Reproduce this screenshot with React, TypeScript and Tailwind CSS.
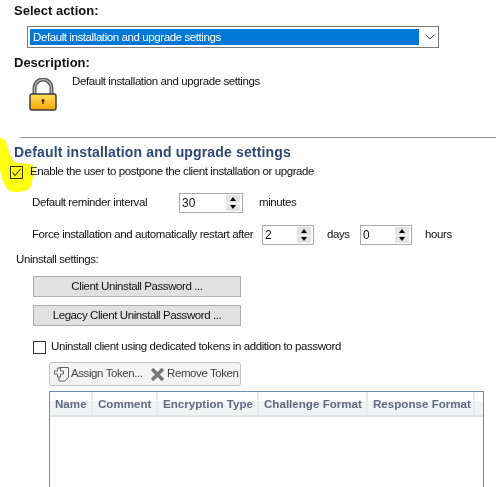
import { ChevronDown } from "lucide-react";

const uiFont = { fontFamily: '"Liberation Sans", Arial, sans-serif' };

function Spin({ value, className }: { value: string; className: string }) {
  return (
    <div className={`flex h-[20px] items-stretch border border-[#ababab] bg-white ${className}`}>
      <span className="flex-1 pl-[2px] text-[12px] leading-[18px] tracking-normal">{value}</span>
      <div className="my-px mr-[2px] flex w-[14px] flex-col gap-px">
        <div className="flex flex-1 items-center justify-center bg-[#e3e3e3]">
          <div className="h-0 w-0 border-x-[3.5px] border-b-[4px] border-x-transparent border-b-black" />
        </div>
        <div className="flex flex-1 items-center justify-center bg-[#e3e3e3]">
          <div className="h-0 w-0 border-x-[3.5px] border-t-[4px] border-x-transparent border-t-black" />
        </div>
      </div>
    </div>
  );
}

function CheckBox({ checked }: { checked?: boolean }) {
  return (
    <div className="flex h-[13px] w-[13px] shrink-0 items-center justify-center border border-[#333]">
      {checked && (
        <svg width="11" height="11" viewBox="0 0 11 11" fill="none">
          <path d="M1.5 5.5 L4 8.5 L9.5 2" stroke="#333" strokeWidth="1.1" />
        </svg>
      )}
    </div>
  );
}

function GrayButton({ label }: { label: string }) {
  return (
    <div className="flex h-[21px] w-[208px] items-center justify-center border border-[#adadad] bg-[#e1e1e1]">
      {label}
    </div>
  );
}

function LockIcon() {
  return (
    <svg width="30" height="33" viewBox="0 0 30 33">
      <defs>
        <linearGradient id="lockBody" x1="0" y1="0" x2="0" y2="1">
          <stop offset="0" stopColor="#ffe25a" />
          <stop offset="1" stopColor="#f7a400" />
        </linearGradient>
      </defs>
      <path d="M6.5 17 V10 a8.5 8.5 0 0 1 17 0 V17" fill="none" stroke="#555" strokeWidth="4" />
      <path d="M6.5 16 V10 a8.5 8.5 0 0 1 17 0 V16" fill="none" stroke="#b5b5b5" strokeWidth="1.5" />
      <rect x="2" y="16" width="26" height="16" rx="2" fill="url(#lockBody)" stroke="#3c3c3c" strokeWidth="1.5" />
      <circle cx="15" cy="22.5" r="1.5" fill="#3a2a00" />
      <rect x="14.3" y="22.5" width="1.4" height="3.5" fill="#3a2a00" />
    </svg>
  );
}

const columns = [
  { name: "Name", width: "w-[43px]" },
  { name: "Comment", width: "w-[65px]" },
  { name: "Encryption Type", width: "w-[101px]" },
  { name: "Challenge Format", width: "w-[109px]" },
  { name: "Response Format", width: "w-[107px]" },
];

export default function App() {
  return (
    <div
      className="relative h-[487px] w-[496px] overflow-hidden whitespace-nowrap bg-white text-[11.5px] tracking-[-0.41px] text-[#111]"
      style={uiFont}
    >
      <div className="flex flex-col">
        <div className="ml-[14px] mt-[3px] h-[16px] text-[13px] font-bold leading-[16px] tracking-normal">Select action:</div>

        <div className="ml-[27px] mt-[7px] flex h-[22px] w-[412px] items-center border border-[#7a7a7a] p-[2px]">
          <div className="h-[16px] w-[389px] shrink-0 bg-[#0078d7] pl-[3px] leading-[16px] text-white">
            Default installation and upgrade settings
          </div>
          <ChevronDown className="ml-[3px] h-[16px] w-[16px] shrink-0 text-[#555]" strokeWidth={1.5} />
        </div>

        <div className="ml-[14px] mt-[7px] h-[16px] text-[13px] font-bold leading-[16px] tracking-normal">Description:</div>

        <div className="ml-[28px] flex h-[66px] items-start">
          <div className="mt-[7px]">
            <LockIcon />
          </div>
          <span className="ml-[14px] mt-[3px] leading-[14px]">Default installation and upgrade settings</span>
        </div>

        <div className="ml-[20px] h-px bg-[#8c8c8c]" />

        <div className="ml-[14px] mt-[5px] h-[18px] text-[14px] font-bold leading-[18px] tracking-[0.15px] text-[#2c4a75]">
          Default installation and upgrade settings
        </div>

        <div className="ml-[10px] mt-[4px] flex h-[14px] items-center gap-[7px]">
          <CheckBox checked />
          <span>Enable the user to postpone the client installation or upgrade</span>
        </div>

        <div className="ml-[32px] mt-[14px] flex h-[20px] items-center">
          <span className="w-[147px]">Default reminder interval</span>
          <Spin value="30" className="w-[64px]" />
          <span className="ml-[16px]">minutes</span>
        </div>

        <div className="ml-[32px] mt-[12px] flex h-[20px] items-center">
          <span className="w-[230px]">Force installation and automatically restart after</span>
          <Spin value="2" className="w-[52px]" />
          <span className="ml-[13px] w-[33px]">days</span>
          <Spin value="0" className="w-[52px]" />
          <span className="ml-[13px]">hours</span>
        </div>

        <div className="ml-[16px] mt-[7px] h-[14px] leading-[14px]">Uninstall settings:</div>

        <div className="ml-[33px] mt-[10px] flex flex-col gap-[8px]">
          <GrayButton label="Client Uninstall Password ..." />
          <GrayButton label="Legacy Client Uninstall Password ..." />
        </div>

        <div className="ml-[33px] mt-[14px] flex h-[14px] items-center gap-[5px]">
          <CheckBox />
          <span>Uninstall client using dedicated tokens in addition to password</span>
        </div>

        <div className="ml-[49px] mt-[8px] flex h-[24px] w-[192px] items-center rounded-[3px] border border-[#c4c4c4] bg-[#f3f3f3] pl-[4px] text-[#444]">
          <svg width="16" height="16" viewBox="0 0 16 16" fill="none" stroke="#666">
            <path d="M5 1.5 H14.5 V11 L11 15 H5 V10" />
            <path d="M3.5 2 H6.5 V5 H9.5 V8 H6.5 V11 H3.5 V8 H0.5 V5 H3.5 Z" fill="#f3f3f3" />
          </svg>
          <span className="ml-[1px] w-[79px]">Assign Token...</span>
          <svg width="15" height="15" viewBox="0 0 15 15" stroke="#777" strokeWidth="3.5">
            <path d="M2 2 L13 13 M13 2 L2 13" />
          </svg>
          <span className="ml-[2px]">Remove Token</span>
        </div>

        <div className="ml-[49px] mt-[5px] h-[120px] w-[435px] border border-b-0 border-[#6c8cb0]">
          <div className="flex h-[25px] border-b-2 border-[#e2e3e5] bg-[linear-gradient(#ffffff_40%,#f1f2f4_41%)] text-[11.6px] font-bold tracking-normal text-[#5f6c82]">
            {columns.map((c) => (
              <div key={c.name} className={`flex items-center border-r-2 border-[#e8e9eb] pl-[5px] ${c.width}`}>
                {c.name}
              </div>
            ))}
          </div>
        </div>
      </div>

      {/* highlighter mark over the first checkbox */}
      <svg className="absolute left-0 top-[136px] mix-blend-multiply" width="34" height="58" viewBox="0 0 34 58">
        <path d="M0 2 C3 2 6 4 7 9 C9 15 11 22 14 26 C20 28 28 27 33 29 C34 36 33 46 30 52 C26 56 16 57 10 55 C6 53 3 46 2 42 C1 38 0 36 0 34 Z" fill="#ffff14" />
      </svg>
    </div>
  );
}
